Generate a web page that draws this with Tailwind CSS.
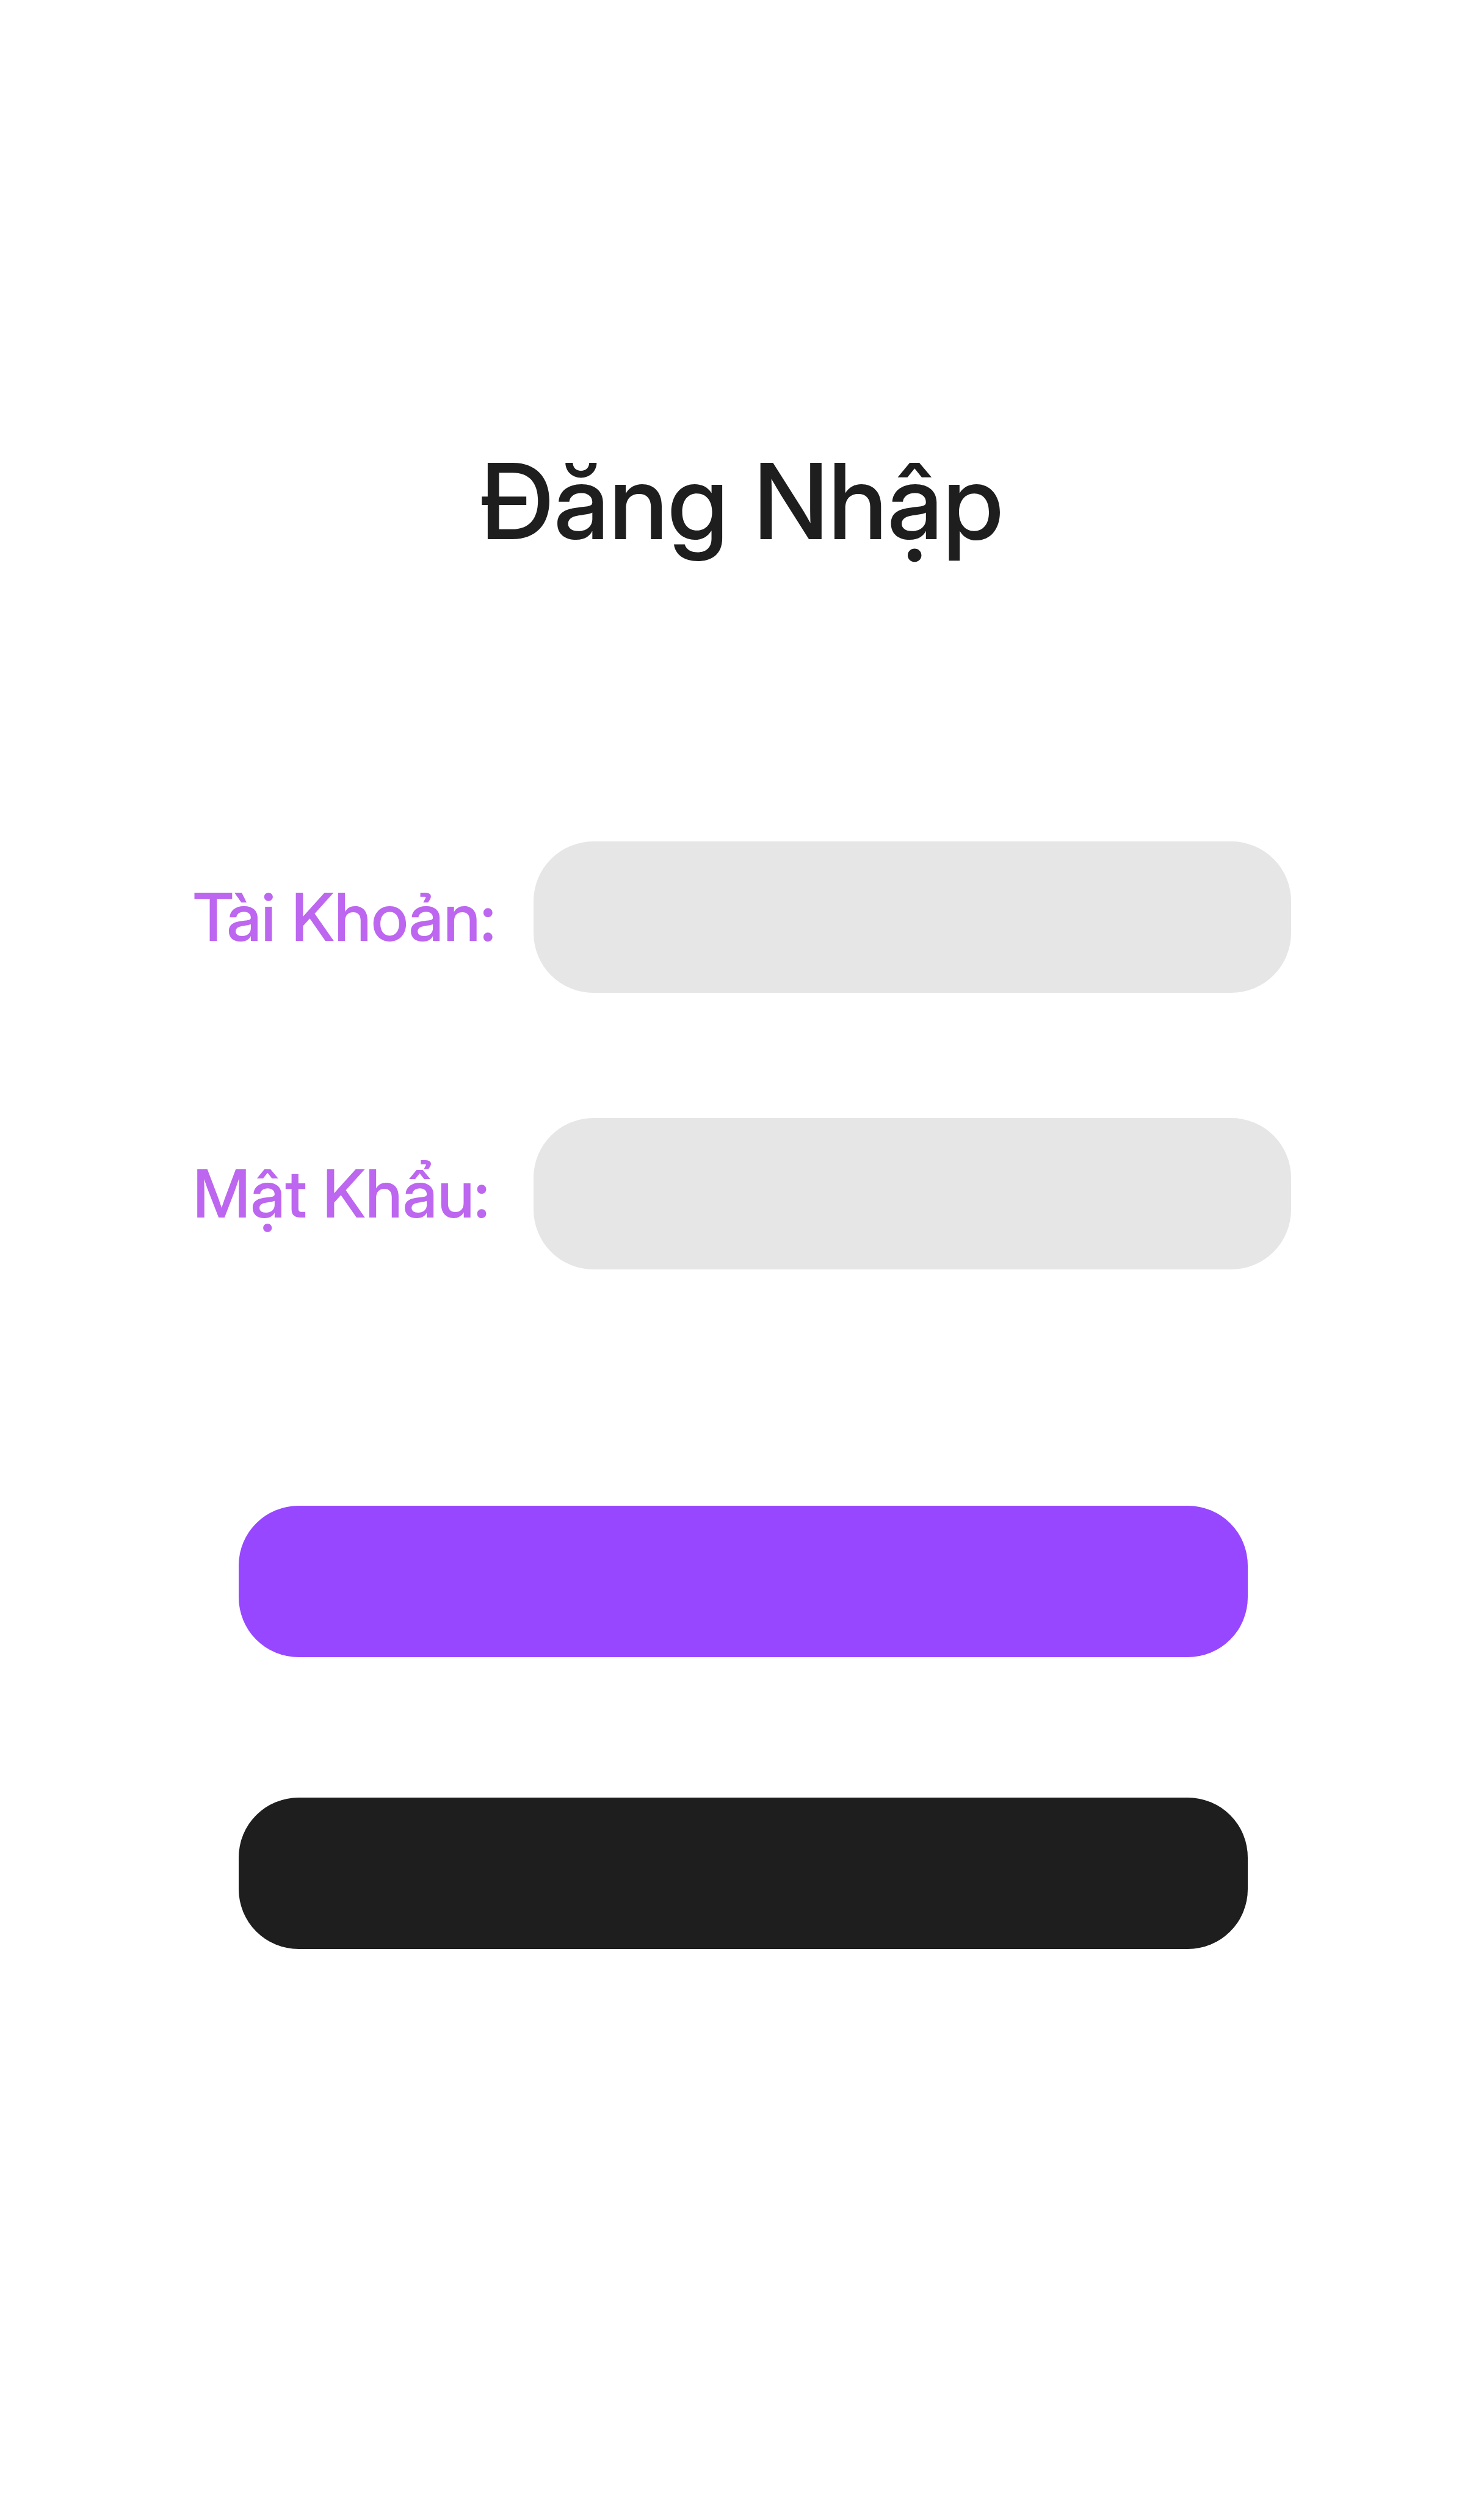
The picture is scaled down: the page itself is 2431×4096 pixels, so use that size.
<!DOCTYPE html>
<html lang="vi">
<head>
<meta charset="utf-8">
<meta name="viewport" content="width=device-width, initial-scale=1">
<title>Đăng Nhập</title>
<script src="https://cdn.jsdelivr.net/npm/@tailwindcss/browser@4"></script>
</head>
<body class="min-h-screen bg-white font-['Inter_Display','Inter',sans-serif] font-medium">
<main class="px-[13%] pt-[718px] pb-40">
  <h1 class="text-center text-[172px] leading-[204px] font-medium whitespace-nowrap text-[#1e1e1e]">Đăng Nhập</h1>
  <form class="mt-[456px]">
    <div class="grid grid-cols-[558px_1fr] items-center gap-y-[205px]">
      <label for="account" class="text-[108px] leading-[128px] whitespace-nowrap text-[#bd66f0]">Tài Khoản:</label>
      <input id="account" name="account" type="text" autocomplete="username" class="h-[248px] w-full rounded-[98px] bg-[#e6e6e6] px-20 text-[108px] outline-none">
      <label for="password" class="text-[108px] leading-[128px] whitespace-nowrap text-[#bd66f0]">Mật Khẩu:</label>
      <input id="password" name="password" type="password" autocomplete="current-password" class="h-[248px] w-full rounded-[98px] bg-[#e6e6e6] px-20 text-[108px] outline-none">
    </div>
    <div class="mt-[387px] flex flex-col gap-[230px] pr-[71px] pl-[75px]">
      <button type="submit" aria-label="Đăng nhập" class="h-[248px] w-full rounded-[98px] bg-[#9747ff]"></button>
      <button type="button" aria-label="Đăng ký" class="h-[248px] w-full rounded-[98px] bg-[#1e1e1e]"></button>
    </div>
  </form>
</main>
</body>
</html>
